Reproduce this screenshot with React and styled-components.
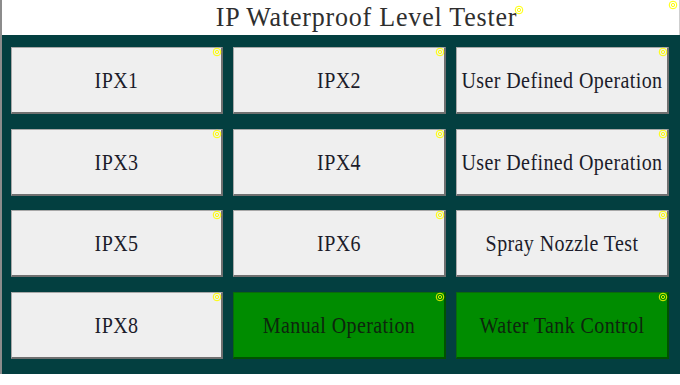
import React from "react";
import styled, { createGlobalStyle } from "styled-components";

const Global = createGlobalStyle`
  html, body { margin: 0; padding: 0; background: #ffffff; }
  body { width: 680px; height: 385px; overflow: hidden; }
`;

const Screen = styled.div`
  width: 680px;
  height: 385px;
  background: #ffffff;
  font-family: "Liberation Serif", "DejaVu Serif", serif;
`;

const Frame = styled.div`
  border-left: 2px solid #8c8c8c;
  width: 680px;
  box-sizing: border-box;
`;

const Header = styled.header`
  position: relative;
  height: 35px;
  display: flex;
  align-items: center;
  justify-content: center;
  padding-left: 52px;
  box-sizing: border-box;
  border-right: 1px solid #cfcfcf;
`;

const Title = styled.h1`
  margin: 0;
  font-weight: normal;
  font-size: 26px;
  letter-spacing: 0.8px;
  line-height: 1;
  color: #2e2e2e;
  white-space: nowrap;
  display: inline-block;
  transform: scaleY(1.06);
`;

const Panel = styled.main`
  width: 678px;
  height: 339px;
  box-sizing: border-box;
  background: #033f40;
  padding: 12px 11px 15px 9px;
  display: grid;
  grid-template-columns: 212px 213px 213px;
  grid-template-rows: repeat(4, 1fr);
  column-gap: 10px;
  row-gap: 14.67px;
`;

const Button = styled.button`
  position: relative;
  margin: 0;
  padding: 0;
  box-sizing: border-box;
  display: flex;
  align-items: center;
  justify-content: center;
  overflow: visible;
  cursor: pointer;
  font-family: inherit;
  background: ${(p) => (p.$active ? "#008c00" : "#efefef")};
  border-style: solid;
  border-width: 1px 2px 2px 1px;
  border-color: ${(p) =>
    p.$active
      ? "#0a6a0a #005200 #005200 #0a6a0a"
      : "#a8a8a8 #707070 #707070 #a8a8a8"};
  color: ${(p) => (p.$active ? "#0d260d" : "#1c1c2a")};
`;

const Label = styled.span`
  display: inline-block;
  white-space: nowrap;
  font-size: 20px;
  letter-spacing: 0.4px;
  line-height: 1;
  transform: scaleY(1.2);
  transform-origin: center;
`;

const Marker = styled.svg`
  position: absolute;
  width: 10px;
  height: 10px;
  top: ${(p) => p.$top}px;
  right: ${(p) => p.$right}px;
`;

const Target = ({ top = -1, right = -1, color = "#ffff00" }) => (
  <Marker $top={top} $right={right} viewBox="0 0 10 10">
    <circle cx="5" cy="5" r="3.8" fill="none" stroke={color} strokeWidth="1" />
    <circle cx="5" cy="5" r="1.6" fill="none" stroke={color} strokeWidth="1" />
  </Marker>
);

const items = [
  { label: "IPX1" },
  { label: "IPX2" },
  { label: "User Defined Operation" },
  { label: "IPX3" },
  { label: "IPX4" },
  { label: "User Defined Operation" },
  { label: "IPX5" },
  { label: "IPX6" },
  { label: "Spray Nozzle Test" },
  { label: "IPX8" },
  { label: "Manual Operation", active: true },
  { label: "Water Tank Control", active: true },
];

export default function App() {
  return (
    <Screen>
      <Global />
      <Frame>
        <Header>
          <Title>IP Waterproof Level Tester</Title>
          <Target top={5} right={155} />
          <Target top={0} right={1} />
        </Header>
        <Panel>
          {items.map((it, i) => (
            <Button key={i} $active={it.active}>
              <Label>{it.label}</Label>
              <Target color={it.active ? "#e4ee00" : "#ffff00"} />
            </Button>
          ))}
        </Panel>
      </Frame>
    </Screen>
  );
}
